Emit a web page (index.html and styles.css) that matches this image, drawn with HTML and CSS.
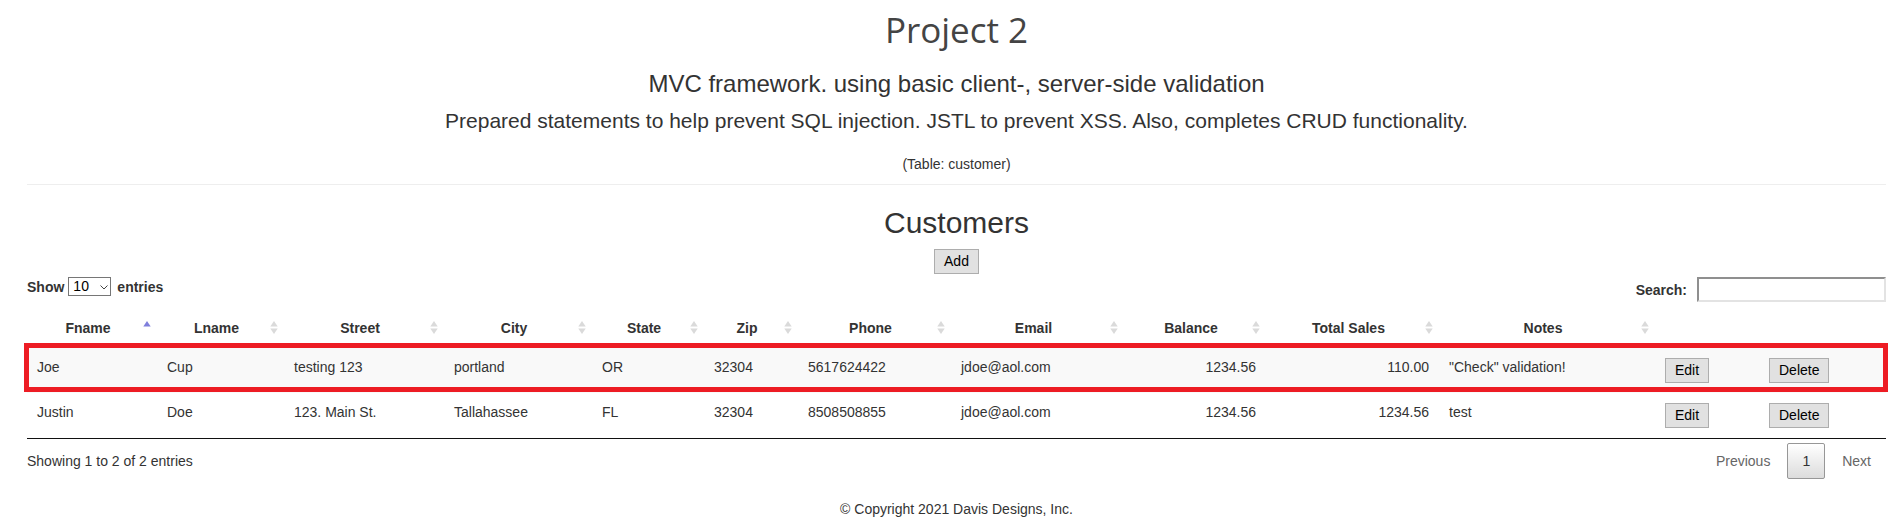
FILE: index.html
```html
<!DOCTYPE html>
<html lang="en">
<head>
<meta charset="utf-8">
<title>Project 2</title>
<link rel="stylesheet" href="styles.css">
</head>
<body>
<div class="page">
  <header class="intro">
    <h1 class="title">Project 2</h1>
    <p class="lead">MVC framework. using basic client-, server-side validation</p>
    <p class="sublead">Prepared statements to help prevent SQL injection. JSTL to prevent XSS. Also, completes CRUD functionality.</p>
    <p class="note">(Table: customer)</p>
  </header>
  <hr class="rule">
  <section class="customers">
    <h2 class="section-title">Customers</h2>
    <div class="add-row"><button class="btn" type="button">Add</button></div>
    <div class="controls">
      <label class="length"><span>Show</span><span class="select-wrap"><select class="len-select"><option>10</option><option>25</option><option>50</option><option>100</option></select><svg class="chev" width="8" height="5" viewBox="0 0 8 5"><polyline points="0.5,0.5 4,4 7.5,0.5" fill="none" stroke="#444" stroke-width="1"/></svg></span><span>entries</span></label>
      <label class="filter"><span>Search:</span><input class="search" type="search"></label>
    </div>
    <div class="table-wrap">
      <table class="grid">
        <colgroup>
          <col class="c-fname"><col class="c-lname"><col class="c-street"><col class="c-city"><col class="c-state"><col class="c-zip"><col class="c-phone"><col class="c-email"><col class="c-balance"><col class="c-sales"><col class="c-notes"><col class="c-edit"><col class="c-del">
        </colgroup>
        <thead>
          <tr>
            <th>Fname<svg class="sort" width="8" height="15" viewBox="0 0 8 15"><path d="M0.3 6.5 L4 1 L7.7 6.5Z" fill="#7f7fdc"/></svg></th>
            <th>Lname<svg class="sort" width="8" height="15" viewBox="0 0 8 15"><path d="M0.3 6.5 L4 1 L7.7 6.5Z" fill="#dadada"/><path d="M0.3 8.5 L4 14 L7.7 8.5Z" fill="#dadada"/></svg></th>
            <th>Street<svg class="sort" width="8" height="15" viewBox="0 0 8 15"><path d="M0.3 6.5 L4 1 L7.7 6.5Z" fill="#dadada"/><path d="M0.3 8.5 L4 14 L7.7 8.5Z" fill="#dadada"/></svg></th>
            <th>City<svg class="sort" width="8" height="15" viewBox="0 0 8 15"><path d="M0.3 6.5 L4 1 L7.7 6.5Z" fill="#dadada"/><path d="M0.3 8.5 L4 14 L7.7 8.5Z" fill="#dadada"/></svg></th>
            <th>State<svg class="sort" width="8" height="15" viewBox="0 0 8 15"><path d="M0.3 6.5 L4 1 L7.7 6.5Z" fill="#dadada"/><path d="M0.3 8.5 L4 14 L7.7 8.5Z" fill="#dadada"/></svg></th>
            <th>Zip<svg class="sort" width="8" height="15" viewBox="0 0 8 15"><path d="M0.3 6.5 L4 1 L7.7 6.5Z" fill="#dadada"/><path d="M0.3 8.5 L4 14 L7.7 8.5Z" fill="#dadada"/></svg></th>
            <th>Phone<svg class="sort" width="8" height="15" viewBox="0 0 8 15"><path d="M0.3 6.5 L4 1 L7.7 6.5Z" fill="#dadada"/><path d="M0.3 8.5 L4 14 L7.7 8.5Z" fill="#dadada"/></svg></th>
            <th>Email<svg class="sort" width="8" height="15" viewBox="0 0 8 15"><path d="M0.3 6.5 L4 1 L7.7 6.5Z" fill="#dadada"/><path d="M0.3 8.5 L4 14 L7.7 8.5Z" fill="#dadada"/></svg></th>
            <th>Balance<svg class="sort" width="8" height="15" viewBox="0 0 8 15"><path d="M0.3 6.5 L4 1 L7.7 6.5Z" fill="#dadada"/><path d="M0.3 8.5 L4 14 L7.7 8.5Z" fill="#dadada"/></svg></th>
            <th>Total Sales<svg class="sort" width="8" height="15" viewBox="0 0 8 15"><path d="M0.3 6.5 L4 1 L7.7 6.5Z" fill="#dadada"/><path d="M0.3 8.5 L4 14 L7.7 8.5Z" fill="#dadada"/></svg></th>
            <th>Notes<svg class="sort" width="8" height="15" viewBox="0 0 8 15"><path d="M0.3 6.5 L4 1 L7.7 6.5Z" fill="#dadada"/><path d="M0.3 8.5 L4 14 L7.7 8.5Z" fill="#dadada"/></svg></th>
            <th class="plain"></th>
            <th class="plain"></th>
          </tr>
        </thead>
        <tbody>
          <tr class="odd">
            <td>Joe</td><td>Cup</td><td>testing 123</td><td>portland</td><td>OR</td><td>32304</td><td>5617624422</td><td>jdoe@aol.com</td><td class="num">1234.56</td><td class="num">110.00</td><td>"Check" validation!</td>
            <td class="act"><button class="btn" type="button">Edit</button></td>
            <td class="act"><button class="btn" type="button">Delete</button></td>
          </tr>
          <tr class="even">
            <td>Justin</td><td>Doe</td><td>123. Main St.</td><td>Tallahassee</td><td>FL</td><td>32304</td><td>8508508855</td><td>jdoe@aol.com</td><td class="num">1234.56</td><td class="num">1234.56</td><td>test</td>
            <td class="act"><button class="btn" type="button">Edit</button></td>
            <td class="act"><button class="btn" type="button">Delete</button></td>
          </tr>
        </tbody>
      </table>
      <div class="highlight"></div>
    </div>
    <div class="table-foot">
      <div class="info">Showing 1 to 2 of 2 entries</div>
      <div class="paging"><span class="pg disabled">Previous</span><span class="pg current">1</span><span class="pg disabled">Next</span></div>
    </div>
  </section>
  <footer class="site-foot">© Copyright 2021 Davis Designs, Inc.</footer>
</div>
</body>
</html>
```

FILE: styles.css
```css
* { box-sizing: border-box; }
html, body { margin: 0; padding: 0; background: #fff; }
body {
  font-family: "Liberation Sans", Arial, sans-serif;
  font-size: 14px;
  line-height: 20px;
  color: #333;
}
.page { margin-left: 27px; width: 1859px; }

.intro { text-align: center; }
.title {
  margin: 10px 0 0;
  font-family: "Open Sans", "Noto Sans", sans-serif;
  font-weight: 400;
  font-size: 35px;
  line-height: 40px;
  color: #444;
}
.lead { margin: 21px 0 0; font-size: 24px; line-height: 26px; }
.sublead { margin: 12px 0 0; font-size: 21px; line-height: 24px; }
.note { margin: 23px 0 0; font-size: 14px; line-height: 16px; }
.rule { margin: 12px 0 0; height: 0; border: 0; border-top: 1px solid #eee; }

.section-title {
  margin: 21px 0 0;
  text-align: center;
  font-size: 30px;
  line-height: 33px;
  font-weight: 400;
}
.add-row { margin-top: 10px; display: flex; justify-content: center; }

.btn {
  font-family: "Liberation Sans", Arial, sans-serif;
  font-size: 14px;
  line-height: 23px;
  height: 25px;
  padding: 0 9px;
  border: 1px solid #adadad;
  border-radius: 0;
  background: #e1e1e1;
  color: #000;
  display: block;
}

.controls {
  margin-top: 3px;
  display: flex;
  justify-content: space-between;
  align-items: flex-start;
  font-weight: bold;
}
.length { display: flex; align-items: center; height: 19px; line-height: 16px; }
.select-wrap { position: relative; display: block; margin: 0 6px 0 4px; width: 43px; height: 19px; }
.len-select {
  appearance: none;
  -webkit-appearance: none;
  display: block;
  width: 43px;
  height: 19px;
  margin: 0;
  padding: 0 0 0 4px;
  border: 1px solid #767676;
  border-radius: 0;
  background: #fff;
  color: #000;
  font-family: "Liberation Sans", Arial, sans-serif;
  font-size: 14px;
  line-height: 17px;
  font-weight: normal;
}
.chev { position: absolute; left: 32px; top: 8px; pointer-events: none; }

.filter { display: flex; align-items: center; height: 25px; line-height: 16px; }
.search {
  margin: 0 0 0 10px;
  width: 189px;
  height: 25px;
  padding: 0 3px;
  border-style: solid;
  border-width: 2px;
  border-color: #8f8f8f #e3e3e3 #e3e3e3 #8f8f8f;
  font-family: "Liberation Sans", Arial, sans-serif;
  font-size: 14px;
  background: #fff;
}

.table-wrap { position: relative; margin-top: 8px; }
.grid {
  width: 1859px;
  table-layout: fixed;
  border-collapse: separate;
  border-spacing: 0;
  border-bottom: 1px solid #111;
}
.c-fname { width: 130px; }
.c-lname { width: 127px; }
.c-street { width: 160px; }
.c-city { width: 148px; }
.c-state { width: 112px; }
.c-zip { width: 94px; }
.c-phone { width: 153px; }
.c-email { width: 173px; }
.c-balance { width: 142px; }
.c-sales { width: 173px; }
.c-notes { width: 216px; }
.c-edit { width: 104px; }
.c-del { width: 127px; }

.grid th {
  position: relative;
  padding: 10px 18px 11px 10px;
  line-height: 16px;
  font-weight: bold;
  text-align: center;
  color: #333;
  border-bottom: 1px solid #111;
  white-space: nowrap;
}
.grid th.plain { padding: 10px 10px 11px; }
.sort { position: absolute; right: 6px; top: 50%; margin-top: -9px; }

.grid td {
  padding: 11px 10px 8px;
  line-height: 16px;
  vertical-align: top;
  text-align: left;
  white-space: nowrap;
}
.grid td.num { text-align: right; }
.grid td.act { padding: 10px 10px; }
.grid tr.odd td { background: #f9f9f9; }
.grid tr.even td { background: #fff; }

.highlight {
  position: absolute;
  left: -3px;
  right: -2px;
  top: 33px;
  height: 49px;
  border: 5px solid #ed1c24;
  pointer-events: none;
}

.table-foot { display: flex; justify-content: space-between; align-items: flex-start; }
.info { padding-top: 12px; line-height: 20px; }
.paging { display: flex; padding-top: 4px; }
.pg {
  display: block;
  margin-left: 2px;
  padding: 7px 14px;
  line-height: 20px;
  border: 1px solid transparent;
  border-radius: 2px;
  color: #666;
}
.pg.current {
  color: #333;
  border-color: #979797;
  background: linear-gradient(to bottom, #fff 0%, #dcdcdc 100%);
}

.site-foot { margin-top: 20px; text-align: center; line-height: 20px; }
```
